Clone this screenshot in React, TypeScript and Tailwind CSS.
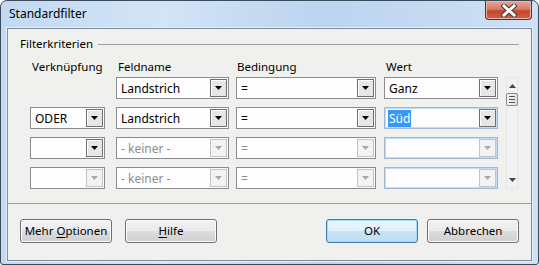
import React from "react";

type ComboProps = {
  text?: string;
  width: string;
  disabled?: boolean;
  arrowDisabled?: boolean;
  blue?: boolean;
  selected?: boolean;
};

const Arrow = ({ disabled }: { disabled?: boolean }) => (
  <div
    className={
      "ml-auto mr-[1px] flex h-[18px] w-[17px] items-center justify-center border " +
      (disabled
        ? "border-[#c4c4c4] bg-[#f3f3f3]"
        : "border-[#6f6f6f] bg-[#e6e6e6] shadow-[inset_1px_1px_0_#ffffff]")
    }
  >
    <svg width="9" height="5" viewBox="0 0 9 5">
      <path d="M1 0h7L4.5 4z" fill={disabled ? "#a8a8a8" : "#000000"} />
    </svg>
  </div>
);

const Combo = ({ text, width, disabled, arrowDisabled, blue, selected }: ComboProps) => (
  <div
    className={
      "flex h-[22px] items-center border " +
      width +
      (blue
        ? " border-[#a3b8cf] bg-[#fdfdfd] shadow-[inset_0_0_0_1px_#c6dbf1]"
        : " border-[#8c8c8c] bg-[#fdfdfd]")
    }
  >
    {text !== undefined && (
      <span
        className={
          "ml-[3px] px-[1px] text-[12px] leading-[17px] " +
          (selected ? "bg-[#3399ff] text-white" : disabled ? "text-[#8d8d8d]" : "text-black")
        }
      >
        {text}
      </span>
    )}
    <Arrow disabled={arrowDisabled ?? disabled} />
  </div>
);

const Button = ({
  children,
  focused,
}: {
  children: React.ReactNode;
  focused?: boolean;
}) => (
  <div
    className={
      "flex h-[24px] w-[92px] items-center justify-center rounded-[3px] border text-black " +
      (focused
        ? "border-[#3c7fb1] bg-[linear-gradient(#eaf6fd_0%,#dff0fa_50%,#c7e4f5_50%,#bfdff2_100%)] shadow-[inset_0_0_0_1px_#9fdcfb]"
        : "border-[#707070] bg-[linear-gradient(#f2f2f2_0%,#ebebeb_50%,#dddddd_50%,#cfcfcf_100%)] shadow-[inset_0_0_0_1px_#fcfcfc]")
    }
  >
    {children}
  </div>
);

const App = () => {
  return (
    <div
      className="flex h-[265px] w-[539px] flex-col overflow-hidden rounded-t-[7px] rounded-b-[3px] border border-[#3d4a5a] bg-[linear-gradient(90deg,#c2d9f1_0%,#d2e4f7_30%,#bcd4ee_60%,#cde1f6_100%)] text-[11.5px]"
      style={{ fontFamily: '"Noto Sans", "Open Sans", sans-serif' }}
    >
      {/* title bar */}
      <div className="flex h-[27px] items-start">
        <span className="ml-[8px] mt-[5px] text-[12px] leading-[16px] text-[#000]">Standardfilter</span>
        <div className="ml-auto mr-[6px] flex h-[19px] w-[47px] items-center justify-center rounded-b-[4px] border border-t-0 border-[#6b2a20] bg-[linear-gradient(#e9a899_0%,#d97b66_45%,#c3452d_55%,#d0604a_100%)] shadow-[inset_0_0_0_1px_#eeb3a6]">
          <svg width="16" height="13" viewBox="0 0 16 13">
            <path
              d="M3 2l10 9M13 2L3 11"
              stroke="#3d3d3d"
              strokeWidth="5"
              strokeLinecap="square"
            />
            <path
              d="M3 2l10 9M13 2L3 11"
              stroke="#ffffff"
              strokeWidth="3"
              strokeLinecap="square"
            />
          </svg>
        </div>
      </div>

      {/* client */}
      <div className="mx-[6px] mb-[3px] flex flex-1 flex-col border border-[#7f8c9a] bg-[#f0f0ee] shadow-[0_0_0_1px_#e4eef9]">
        {/* group header */}
        <div className="mt-[7px] flex items-center pl-[12px] pr-[12px]">
          <span className="leading-[16px] text-black">Filterkriterien</span>
          <div className="ml-[5px] h-[1px] flex-1 bg-[#a0a0a0]" />
        </div>

        {/* column headers */}
        <div className="mt-[7px] flex pl-[24px] leading-[16px] text-black">
          <span className="w-[86px]">Verknüpfung</span>
          <span className="w-[119px]">Feldname</span>
          <span className="w-[149px]">Bedingung</span>
          <span>Wert</span>
        </div>

        <div className="mt-[2px] flex pl-[22px]">
          <div className="flex flex-col gap-[8px]">
            <div className="flex">
              <div className="w-[75px]" />
              <Combo width="ml-[11px] w-[113px]" text="Landstrich" />
              <Combo width="ml-[7px] w-[140px]" text="=" />
              <Combo width="ml-[8px] w-[114px]" text="Ganz" />
            </div>
            <div className="flex">
              <Combo width="w-[75px]" text="ODER" />
              <Combo width="ml-[11px] w-[113px]" text="Landstrich" />
              <Combo width="ml-[7px] w-[140px]" text="=" />
              <Combo width="ml-[8px] w-[114px]" text="Süd" blue selected />
            </div>
            <div className="flex">
              <Combo width="w-[75px]" arrowDisabled={false} />
              <Combo width="ml-[11px] w-[113px]" text="- keiner -" disabled />
              <Combo width="ml-[7px] w-[140px]" text="=" disabled />
              <Combo width="ml-[8px] w-[114px]" blue disabled />
            </div>
            <div className="flex">
              <Combo width="w-[75px]" disabled />
              <Combo width="ml-[11px] w-[113px]" text="- keiner -" disabled />
              <Combo width="ml-[7px] w-[140px]" text="=" disabled />
              <Combo width="ml-[8px] w-[114px]" blue disabled />
            </div>
          </div>

          {/* scrollbar */}
          <div className="ml-[8px] flex h-[112px] w-[12px] flex-col items-center border border-[#e6e6e6] bg-[#f2f2f2]">
            <svg className="mt-[6px]" width="7" height="4" viewBox="0 0 7 4">
              <path d="M3.5 0L7 4H0z" fill="#444" />
            </svg>
            <div className="mt-[5px] flex h-[13px] w-[12px] flex-col items-center justify-center gap-[2px] rounded-[2px] border border-[#8a8a8a] bg-[linear-gradient(90deg,#f4f4f4,#e2e2e2)]">
              <div className="h-[1px] w-[6px] bg-[#555]" />
              <div className="h-[1px] w-[6px] bg-[#555]" />
              <div className="h-[1px] w-[6px] bg-[#555]" />
            </div>
            <svg className="mb-[6px] mt-auto" width="7" height="4" viewBox="0 0 7 4">
              <path d="M0 0h7L3.5 4z" fill="#444" />
            </svg>
          </div>
        </div>

        {/* separator */}
        <div className="mt-[14px] h-[1px] bg-[#a0a0a0]" />

        {/* buttons */}
        <div className="mt-[15px] flex pl-[12px]">
          <Button>
            <span>
              Mehr <span className="underline underline-offset-2">O</span>ptionen
            </span>
          </Button>
          <div className="ml-[13px]">
            <Button>
              <span>
                <span className="underline underline-offset-2">H</span>ilfe
              </span>
            </Button>
          </div>
          <div className="ml-auto">
            <Button focused>OK</Button>
          </div>
          <div className="ml-[9px] mr-[12px]">
            <Button>Abbrechen</Button>
          </div>
        </div>
      </div>
    </div>
  );
};

export default App;
